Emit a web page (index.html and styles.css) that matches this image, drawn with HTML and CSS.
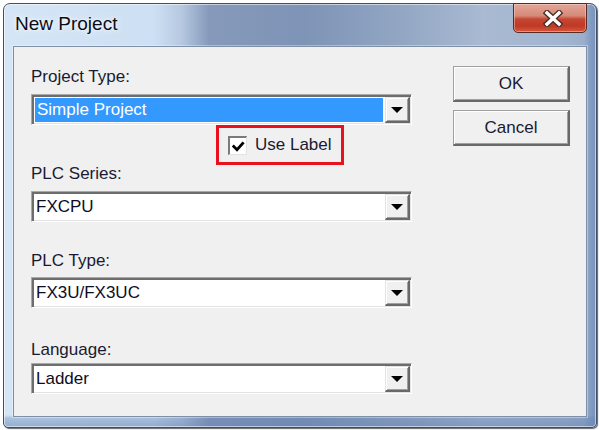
FILE: index.html
```html
<!DOCTYPE html>
<html>
<head>
<meta charset="utf-8">
<title>New Project</title>
<link rel="stylesheet" href="styles.css">
</head>
<body>
<div class="window">
  <div class="titlebar">
    <span class="title">New Project</span>
    <button class="close" aria-label="Close">
      <svg width="20" height="17" viewBox="0 0 20 17">
        <path d="M4 3 L16 14 M16 3 L4 14" stroke="#4a2a26" stroke-width="6" stroke-linecap="square" fill="none"/>
        <path d="M4 3 L16 14 M16 3 L4 14" stroke="#ffffff" stroke-width="3.4" stroke-linecap="square" fill="none"/>
      </svg>
    </button>
  </div>
  <div class="client">
    <div class="fields">
      <div class="label l1">Project Type:</div>
      <div class="combo c1"><div class="value selected">Simple Project</div><span class="drop"><span class="tri"></span></span></div>
      <div class="uselabel">
        <span class="cb"><svg width="16" height="16" viewBox="0 0 16 16"><polyline points="2.8,7.6 7,11.8 13.6,4.4" fill="none" stroke="#000" stroke-width="2.8" stroke-linejoin="miter"/></svg></span>
        <span class="cbtext">Use Label</span>
      </div>
      <div class="label l2">PLC Series:</div>
      <div class="combo c2"><div class="value">FXCPU</div><span class="drop"><span class="tri"></span></span></div>
      <div class="label l3">PLC Type:</div>
      <div class="combo c3"><div class="value">FX3U/FX3UC</div><span class="drop"><span class="tri"></span></span></div>
      <div class="label l4">Language:</div>
      <div class="combo c4"><div class="value">Ladder</div><span class="drop"><span class="tri"></span></span></div>
    </div>
    <div class="actions">
      <button class="btn">OK</button>
      <button class="btn">Cancel</button>
    </div>
  </div>
</div>
</body>
</html>
```

FILE: styles.css
```css
* { box-sizing: border-box; }
html, body { margin: 0; background: #ffffff; }
body {
  width: 599px;
  height: 430px;
  overflow: hidden;
  font-family: "Liberation Sans", Arial, sans-serif;
}
.window {
  margin: 3px 0 0 3px;
  width: 594px;
  height: 425px;
  border: 1px solid #3f4f68;
  border-radius: 7px 7px 5px 5px;
  background:
    linear-gradient(0deg, rgba(96,128,178,0.55) 0, rgba(96,128,178,0.35) 9px, rgba(96,128,178,0) 12px),
    linear-gradient(90deg, rgba(96,128,178,0) 580px, rgba(96,128,178,0.45) 588px, rgba(96,128,178,0.6) 597px),
    linear-gradient(90deg, #d4e5f6 0, #cde0f3 150px, #b5c8e0 178px, #8699ba 205px, #7e94b6 300px, #93a7c4 400px, #a9bad2 480px, #a2b5cf 560px, #93a9c8 597px);
  box-shadow: inset 0 0 0 1px rgba(255,255,255,0.55), 1px 1px 1px rgba(0,0,0,0.6);
  padding: 0 9px 10px 9px;
  display: flex;
  flex-direction: column;
}
.titlebar {
  height: 42px;
  flex: none;
  display: flex;
  align-items: flex-start;
}
.title {
  font-size: 19px;
  line-height: 22px;
  margin: 9px 0 0 2px;
  color: #0c0c18;
  text-shadow: 0 0 8px rgba(255,255,255,0.95), 0 0 3px rgba(255,255,255,0.9);
}
.close {
  margin: -1px 0 0 auto;
  width: 74px;
  height: 30px;
  padding: 0 0 0 6px;
  border: 1px solid #5a2a24;
  border-radius: 0 0 5px 5px;
  background: linear-gradient(180deg, #e3a698 0, #d68a79 42%, #c44631 54%, #bf3a25 78%, #d9563a 100%);
  box-shadow: inset 0 0 0 1px rgba(255,220,210,0.45);
  display: flex;
  align-items: center;
  justify-content: center;
}
.client {
  flex: 1;
  background: #f0f0f0;
  border: 1px solid #7f8fa6;
  box-shadow: 0 0 0 1px rgba(255,255,255,0.35);
  display: flex;
  padding: 0 16px 0 17px;
}
.fields {
  width: 381px;
  flex: none;
  display: flex;
  flex-direction: column;
  align-items: flex-start;
}
.label {
  font-size: 17px;
  line-height: 17px;
  color: #1a1a33;
  white-space: nowrap;
}
.l1 { margin-top: 21px; }
.l2 { margin-top: 0; }
.l3 { margin-top: 30px; }
.l4 { margin-top: 33px; }
.combo {
  width: 381px;
  height: 31px;
  flex: none;
  display: flex;
  background: #ffffff;
  border-style: solid;
  border-width: 1px;
  border-color: #a9a9a9 #ffffff #ffffff #a9a9a9;
  box-shadow: inset 2px 2px 0 #6d6d6d, inset -1px -1px 0 #e3e3e3;
  padding: 2px 1px 1px 2px;
}
.c1 { margin-top: 9px; }
.c2 { margin-top: 9px; }
.c3 { margin-top: 8px; }
.c4 { margin-top: 5px; }
.value {
  flex: 1;
  font-size: 17px;
  line-height: 26px;
  padding-left: 2px;
  color: #0d0d1f;
  white-space: nowrap;
}
.value.selected {
  margin: 1px 2px 1px 1px;
  line-height: 24px;
  padding-left: 2px;
  background: #3399ff;
  color: #ffffff;
}
.drop {
  width: 25px;
  height: 26px;
  flex: none;
  background: #f0f0f0;
  border-style: solid;
  border-width: 1px 2px 2px 1px;
  border-color: #e3e3e3 #696969 #696969 #e3e3e3;
  box-shadow: inset 1px 1px 0 #ffffff, inset -1px -1px 0 #a0a0a0;
  display: flex;
  align-items: center;
  justify-content: center;
}
.tri {
  width: 0;
  height: 0;
  border-left: 6px solid transparent;
  border-right: 6px solid transparent;
  border-top: 6px solid #000000;
  margin-top: 1px;
}
.uselabel {
  margin-left: 185px;
  width: 128px;
  height: 40px;
  flex: none;
  border: 3px solid #e8111d;
  display: flex;
  align-items: center;
  padding-left: 9px;
  gap: 8px;
  font-size: 17px;
  color: #1a1a33;
}
.cb {
  width: 19px;
  height: 19px;
  flex: none;
  background: #ffffff;
  border-style: solid;
  border-width: 2px 1px 1px 2px;
  border-color: #7a7a7a #e3e3e3 #e3e3e3 #7a7a7a;
  display: flex;
}
.cbtext { white-space: nowrap; line-height: 20px; }
.actions {
  margin-left: 41px;
  padding-top: 19px;
  display: flex;
  flex-direction: column;
  gap: 8px;
}
.btn {
  width: 117px;
  height: 36px;
  padding: 0;
  background: #f0f0f0;
  font-family: "Liberation Sans", Arial, sans-serif;
  font-size: 17px;
  color: #1a1a33;
  border-style: solid;
  border-width: 1px 2px 2px 1px;
  border-color: #a0a0a0 #696969 #696969 #a0a0a0;
  box-shadow: inset 1px 1px 0 #ffffff, inset -1px -1px 0 #a0a0a0;
}
```
